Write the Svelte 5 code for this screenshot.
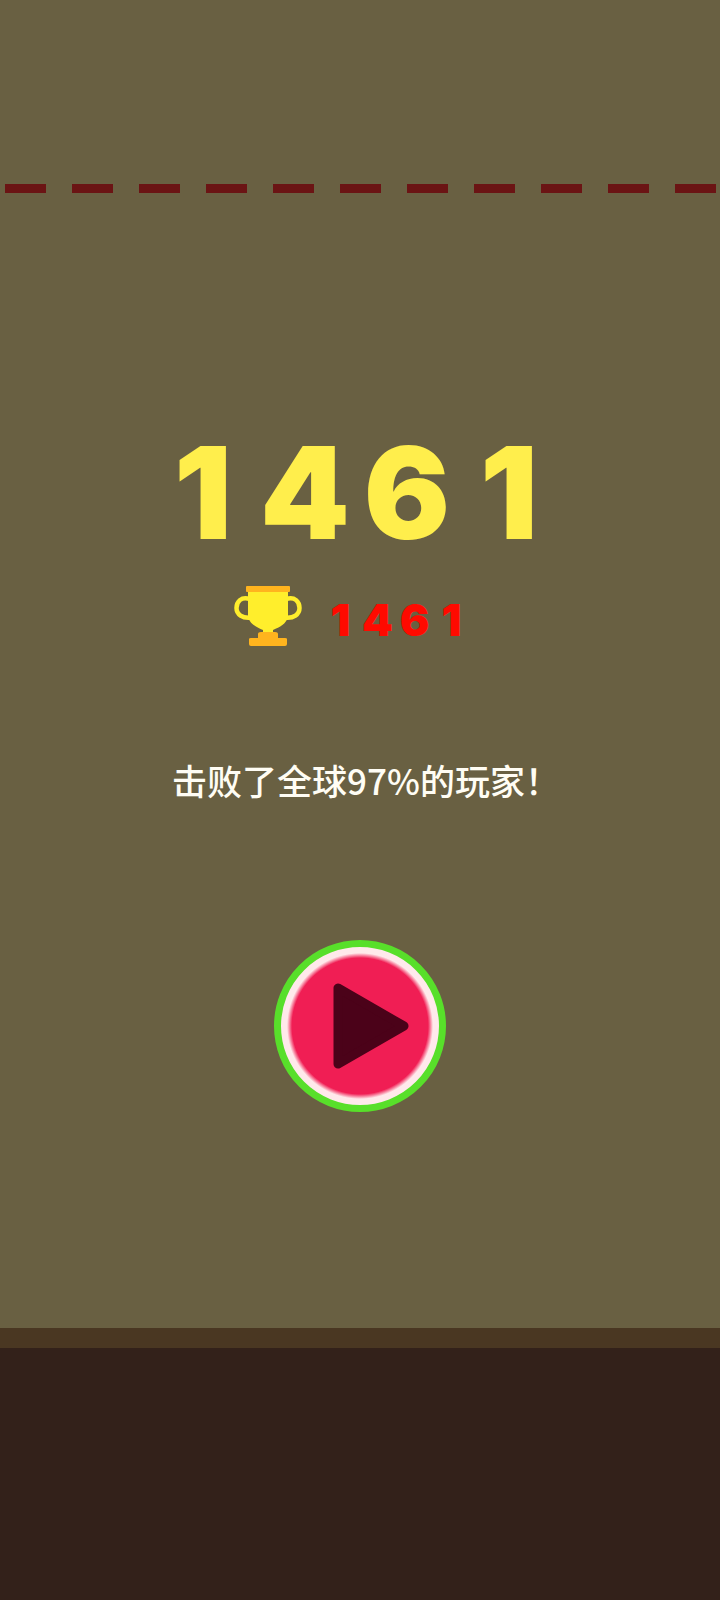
<script lang="ts">
	const score = 1461;
	const best = 1461;
	const percent = 97;
	const dashes = Array(11).fill(0);
</script>

{#snippet digits(value)}
	{#each String(value) as digit}<span>{digit}</span>{/each}
{/snippet}

<main>
	<div class="limit">
		{#each dashes as _}
			<i></i>
		{/each}
	</div>

	<section class="result">
		<h1 class="score">{@render digits(score)}</h1>

		<div class="best">
			<svg class="trophy" viewBox="0 0 68 60" aria-hidden="true">
				<g fill="none" stroke="#ffee2c" stroke-width="4.500">
					<path d="M16 13C7 10 2.500 16 2.500 22C2.500 28 8 33 18 31.500" />
					<path d="M52 13C61 10 65.500 16 65.500 22C65.500 28 60 33 50 31.500" />
				</g>
				<path
					d="M14 4H54V31C52 38 46 41 39 44V48H29V44C22 41 16 38 14 31Z"
					fill="#ffee2c"
				/>
				<rect x="12" y="0" width="44" height="6" rx="1" fill="#ffb41e" />
				<path
					d="M27 46H41Q44 46 44 48V52H51Q53 52 53 53V58Q53 60 51 60H17Q15 60 15 58V53Q15 52 17 52H24V48Q24 46 27 46Z"
					fill="#ffb41e"
				/>
			</svg>
			<strong>{@render digits(best)}</strong>
		</div>

		<p>击败了全球{percent}%的玩家！</p>

		<button type="button" aria-label="再玩一次">
			<svg viewBox="0 0 76 86" aria-hidden="true">
				<path
					d="M5 5V81L71 43Z"
					fill="#4b0219"
					stroke="#4b0219"
					stroke-width="9"
					stroke-linejoin="round"
				/>
			</svg>
		</button>
	</section>

	<footer></footer>
</main>

<style>
	:global(body) {
		margin: 0;
		background: #696042;
	}
	main {
		display: flex;
		flex-direction: column;
		min-height: 100vh;
		font-family: Inter, 'Noto Sans CJK SC', sans-serif;
	}
	.limit {
		display: flex;
		justify-content: space-between;
		padding: 184px 4px 0 5px;
	}
	.limit i {
		width: 41px;
		height: 9px;
		background: #6b1414;
	}
	.result {
		display: flex;
		flex: 1;
		flex-direction: column;
		align-items: center;
		padding-top: 244px;
	}
	.score {
		display: flex;
		margin: 0;
		padding-right: 8px;
		font-size: 128px;
		font-weight: 900;
		line-height: 112px;
		color: #ffee4c;
	}
	.score span {
		width: 102px;
		text-align: center;
	}
	.best {
		display: flex;
		gap: 20px;
		margin-top: 37px;
		padding-right: 16px;
	}
	.trophy {
		width: 68px;
		height: 60px;
	}
	.best strong {
		display: flex;
		padding-top: 4px;
		font-size: 44px;
		font-weight: 900;
		line-height: 60px;
		color: #ff0a00;
	}
	.best span {
		width: 37px;
		text-align: center;
	}
	p {
		margin: 106px 0 0;
		padding-left: 12px;
		font-family: 'Noto Sans CJK SC', sans-serif;
		font-size: 35px;
		font-weight: 500;
		line-height: 48px;
		color: #fffdf4;
	}
	button {
		display: flex;
		align-items: center;
		justify-content: center;
		width: 172px;
		height: 172px;
		margin: 136px 0 40px;
		padding: 0 0 0 21px;
		border: 7px solid #58df2a;
		border-radius: 50%;
		background: radial-gradient(circle closest-side, #f01e54 68px, #ffe9eb 73px);
		cursor: pointer;
	}
	button svg {
		width: 76px;
		height: 86px;
	}
	footer {
		height: 252px;
		border-top: 20px solid #4a3722;
		background: #33211a;
	}
</style>
